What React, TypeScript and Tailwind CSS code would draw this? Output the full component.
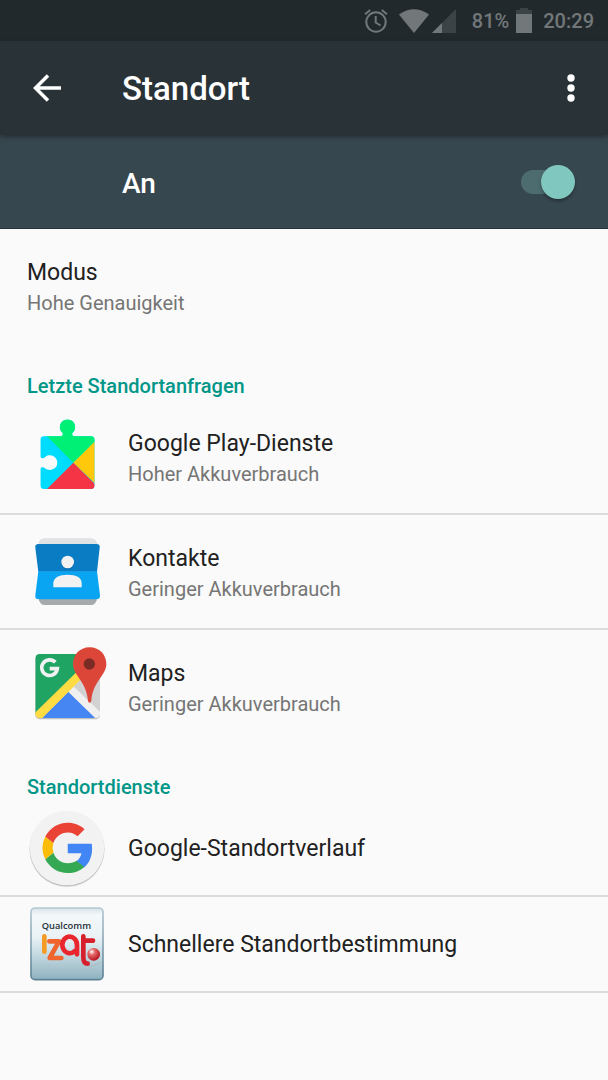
import type { ReactNode } from "react";

function StatusBar() {
  return (
    <div className="flex h-[41px] items-center justify-end bg-[#22292c] pr-3.5 text-[20px] leading-6 font-medium text-[#72787a]">
      <svg className="mr-[11px] h-6 w-6" viewBox="0 0 24 24" fill="none" stroke="#72787a" strokeWidth="2" role="img" aria-label="Wecker">
        <circle cx="12" cy="13" r="9.7" />
        <path d="M11.7 7v6.5l4.8 3M1 5.2 6.2 1M23 5.2 17.8 1" />
      </svg>
      <svg className="mr-[3px] h-6 w-[30px]" viewBox="0 0 30 24" role="img" aria-label="WLAN">
        <path d="M0 5.5Q15-5 30 5.5L15 24Z" fill="#72787a" />
      </svg>
      <svg className="mr-4 h-6 w-6" viewBox="0 0 24 24" role="img" aria-label="Mobilfunk">
        <path d="M24 0v24H0Z" fill="#3c4346" />
        <path d="M10 14v10H0Z" fill="#72787a" />
      </svg>
      <span>81%</span>
      <svg className="mr-[11px] ml-[7px] h-[25px] w-4" viewBox="0 0 16 25" role="img" aria-label="Akku">
        <path d="M0 2h4V0h8v2h4v5H0Z" fill="#3c4346" />
        <path d="M0 6h16v19H0Z" fill="#72787a" />
      </svg>
      <span>20:29</span>
    </div>
  );
}

function PlayServicesIcon() {
  return (
    <svg className="h-20 w-20 shrink-0" viewBox="21 21 240 240" aria-hidden="true">
      <defs>
        <clipPath id="puzzle">
          <path d="M72 79H121Q131 79 128 69A23 23 0 1 1 157 69Q154 79 164 79H213Q224 79 224 90V226Q224 237 213 237H72Q61 237 61 226V178Q61 170 69 172C78 174 76 180 90 180A22 22 0 1 0 90 136C76 136 78 143 69 145Q61 146 61 138V90Q61 79 72 79Z" />
        </clipPath>
      </defs>
      <g clipPath="url(#puzzle)">
        <path d="M50 20h180v220H50Z" fill="#00dcff" />
        <path d="M81 79V20H230V89L160 158Z" fill="#00f076" />
        <path d="M230 89V225L160 158Z" fill="#ffc80a" />
        <path d="M160 158 230 228V240H78Z" fill="#f53446" />
      </g>
    </svg>
  );
}

function ContactsIcon() {
  return (
    <svg className="h-20 w-20 shrink-0 overflow-visible" viewBox="21 21 240 240" aria-hidden="true">
      <path d="M57 54Q62 41 73 41H214Q224 41 230 54V226Q225 240 214 240H73Q62 240 57 226Z" fill="#a5aaac" />
      <path d="M57 60V54Q62 41 73 41H214Q224 41 230 54V60Z" fill="#dfe3e3" />
      <path d="M46 68Q44 57 56 57H229Q241 57 239 68L231 140H55Z" fill="#0a7cc4" />
      <path d="M55 139H231L240 211Q241 223 229 223H56Q44 223 46 211Z" fill="#0aa5f2" />
      <circle cx="143" cy="114" r="19" fill="#075d99" opacity=".5" />
      <circle cx="143" cy="111" r="19" fill="#f2f2f2" />
      <path d="M100 187V173Q103 149 143 149T185 173V187Z" fill="#f2f2f2" />
    </svg>
  );
}

function MapsIcon() {
  return (
    <svg className="h-20 w-20 shrink-0 overflow-visible" viewBox="21 36 240 240" aria-hidden="true">
      <defs>
        <clipPath id="map">
          <rect x="46" y="57" width="194" height="192" rx="13" />
        </clipPath>
      </defs>
      <rect x="46" y="61" width="194" height="192" rx="13" fill="#c0c0c0" />
      <g clipPath="url(#map)">
        <path d="M46 57H240V249H46Z" fill="#d2d2d2" />
        <path d="M46 57H240L46 238Z" fill="#20a464" />
        <path d="M66 249 145 170 226 249Z" fill="#4686f3" />
        <path d="M145 170 160 154 248 238 232 255Z" fill="#f0f0f0" />
        <path d="M38 240 173 108 190 126 60 256Z" fill="#ffdb44" />
      </g>
      <path d="M106 82A23.5 23.5 0 1 0 112 101H89" fill="none" stroke="#f1f1f1" strokeWidth="11" />
      <path d="M209 37C178 37 159 61 159 87C159 121 200 140 204 197Q205 203 209 203T214 197C218 140 259 121 259 87C259 61 240 37 209 37Z" fill="#db4639" />
      <circle cx="208" cy="87" r="17" fill="#7b2b26" />
    </svg>
  );
}

function GoogleIcon() {
  return (
    <svg className="h-20 w-20 shrink-0 overflow-visible" viewBox="21 10 240 240" aria-hidden="true">
      <circle cx="141" cy="134" r="113" fill="#dedede" />
      <circle cx="141" cy="133" r="112" fill="#bdbdbd" />
      <circle cx="141" cy="130" r="112" fill="#f2f2f2" />
      <g transform="translate(67 54) scale(6.3)">
        <path fill="#4285f4" d="M23.7 12.26c0-.8-.07-1.4-.2-2.2H12.1v4.5h6.5c-.13 1.1-.84 2.75-2.4 3.85l3.7 2.95c2.5-2.2 3.8-5.3 3.8-9.1Z" />
        <path fill="#34a853" d="M12.1 24c3.24 0 5.95-1.07 7.9-2.9l-3.76-2.93c-1 .7-2.36 1.19-4.14 1.19-3.17 0-5.86-2.1-6.82-4.99L1.4 17.4C3.4 21.3 7.4 24 12.1 24Z" />
        <path fill="#fbbc05" d="M5.28 14.37a7.4 7.4 0 0 1-.02-4.74L1.4 6.6a12 12 0 0 0 0 10.8Z" />
        <path fill="#ea4335" d="M12.1 4.64c2.25 0 3.77.97 4.64 1.78l3.38-3.3C18.04 1.19 15.34 0 12.1 0 7.4 0 3.4 2.7 1.4 6.6l3.86 3.03c.98-2.89 3.67-4.99 6.84-4.99Z" />
      </g>
    </svg>
  );
}

function IzatIcon() {
  return (
    <svg className="h-20 w-20 shrink-0" viewBox="21 15 240 240" role="img" aria-label="Qualcomm Izat">
      <defs>
        <linearGradient id="tile" x1="0" y1="0" x2="0" y2="1">
          <stop offset="0" stopColor="#d5e3ea" />
          <stop offset=".1" stopColor="#f4f8fa" />
          <stop offset=".4" stopColor="#eaf2f5" />
          <stop offset=".6" stopColor="#ccdfe6" />
          <stop offset="1" stopColor="#8fb2c0" />
        </linearGradient>
        <linearGradient id="frame" x1="0" y1="0" x2="0" y2="1">
          <stop offset="0" stopColor="#b4c8d2" />
          <stop offset="1" stopColor="#5d8296" />
        </linearGradient>
        <radialGradient id="ball" cx=".35" cy=".3" r=".7">
          <stop offset="0" stopColor="#fff" />
          <stop offset=".35" stopColor="#e56a6a" />
          <stop offset="1" stopColor="#b8161e" />
        </radialGradient>
      </defs>
      <rect x="33" y="27" width="216" height="215" rx="12" fill="url(#tile)" stroke="url(#frame)" strokeWidth="5" />
      <text x="65" y="89" fontSize="28" className="font-['Open_Sans'] font-semibold" fill="#263238">Qualcomm</text>
      <g fill="none" strokeWidth="14" strokeLinecap="round" strokeLinejoin="round">
        <path d="M73 112V158" stroke="#f59a23" />
        <path d="M88 127H117L89 177H124" stroke="#f0642d" />
        <path d="M171 166V139A22 25 0 1 0 163 157" stroke="#e9252d" />
        <path d="M190 112V174Q190 194 203 194M190 125H219" stroke="#d6212c" />
      </g>
      <path d="m207 205 35-15" stroke="#b0bcc2" strokeWidth="4" />
      <circle cx="221" cy="166" r="19" fill="url(#ball)" />
    </svg>
  );
}

function SectionTitle({ children }: { children: ReactNode }) {
  return <h2 className="px-[27px] pt-[30px] pb-0.5 text-[20px] leading-6 font-medium text-[#009688]">{children}</h2>;
}

type RowProps = { title: string; detail?: string; icon?: ReactNode; divider?: boolean };

function Row({ title, detail, icon, divider }: RowProps) {
  return (
    <li className={`border-b-2 ${divider ? "border-[#dcdcdc]" : "border-transparent"}`}>
      <button
        type="button"
        className={`flex w-full items-center gap-[21px] px-[27px] text-left ${detail ? "h-[113px]" : "h-[94px]"}`}
      >
        {icon}
        <span className={`flex flex-col ${detail ? "pt-1" : "pt-0.5"}`}>
          <span className="text-[23px] leading-[30px] text-[#212121]">{title}</span>
          {detail && <span className="text-[20px] leading-[30px] text-[#757575]">{detail}</span>}
        </span>
      </button>
    </li>
  );
}

export default function App() {
  return (
    <div className="min-h-screen bg-[#fafafa] font-['Roboto',sans-serif]">
      <StatusBar />
      <header className="relative flex h-[94px] items-center bg-[#283237] px-[30px] text-white shadow-[0_2px_5px_rgba(0,0,0,0.35)]">
        <button type="button" aria-label="Zurück" className="w-[92px]">
          <svg className="h-9 w-9" viewBox="0 0 36 36" fill="none" stroke="#fff" strokeWidth="3.5" aria-hidden="true">
            <path d="M31 18H6M18 5.5 5.5 18 18 30.5" />
          </svg>
        </button>
        <h1 className="grow pt-0.5 text-[33px] leading-10 font-medium">Standort</h1>
        <button type="button" aria-label="Weitere Optionen">
          <svg className="h-7 w-4" viewBox="0 0 16 28" fill="#fff" aria-hidden="true">
            <circle cx="9" cy="4" r="3.7" />
            <circle cx="9" cy="14" r="3.7" />
            <circle cx="9" cy="24" r="3.7" />
          </svg>
        </button>
      </header>
      <label className="flex h-[94px] items-center justify-between border-b border-[#263238] bg-[#37474f] pr-[33px] pl-[122px] text-[28px] leading-8 font-medium text-white">
        <span className="pt-1">An</span>
        <span className="relative flex h-[34px] w-[54px] items-center">
          <input type="checkbox" role="switch" defaultChecked className="peer h-6 w-12 appearance-none rounded-full bg-[#4d6c6f]" />
          <span className="pointer-events-none absolute left-0 h-[34px] w-[34px] rounded-full bg-[#bdbdbd] shadow-[0_2px_3px_rgba(0,0,0,0.35)] peer-checked:left-5 peer-checked:bg-[#80c7c0]" />
        </span>
      </label>
      <main>
        <ul>
          <Row title="Modus" detail="Hohe Genauigkeit" />
        </ul>
        <SectionTitle>Letzte Standortanfragen</SectionTitle>
        <ul>
          <Row title="Google Play-Dienste" detail="Hoher Akkuverbrauch" icon={<PlayServicesIcon />} divider />
          <Row title="Kontakte" detail="Geringer Akkuverbrauch" icon={<ContactsIcon />} divider />
          <Row title="Maps" detail="Geringer Akkuverbrauch" icon={<MapsIcon />} />
        </ul>
        <SectionTitle>Standortdienste</SectionTitle>
        <ul>
          <Row title="Google-Standortverlauf" icon={<GoogleIcon />} divider />
          <Row title="Schnellere Standortbestimmung" icon={<IzatIcon />} divider />
        </ul>
      </main>
    </div>
  );
}
